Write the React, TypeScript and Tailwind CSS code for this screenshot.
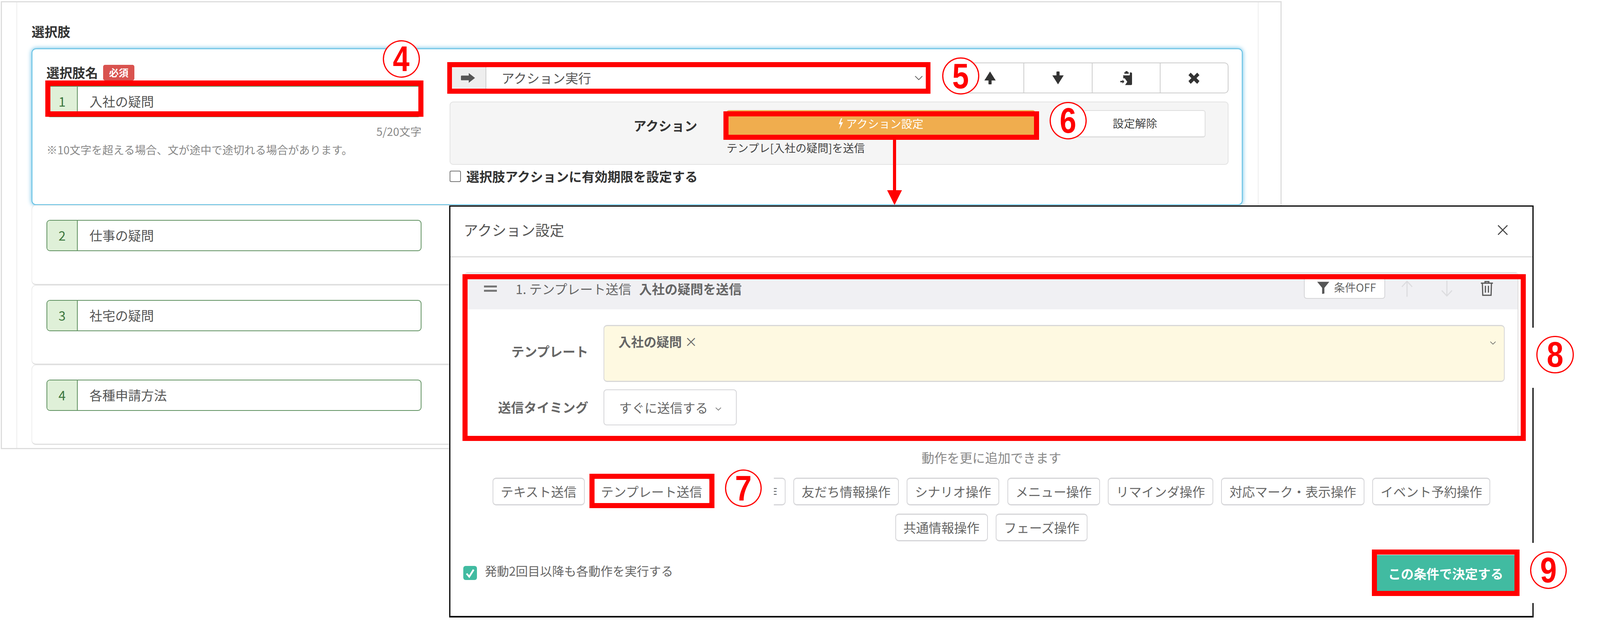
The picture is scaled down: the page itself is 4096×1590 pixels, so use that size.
import type { ReactNode } from 'react';

const Chevron = ({ className }: { className: string }) => (
  <svg viewBox="0 0 24 12" className={className} fill="none" stroke="#555" strokeWidth="2">
    <path d="M2 1l10 10L22 1" />
  </svg>
);

const ArrowUp = ({ className }: { className: string }) => (
  <svg viewBox="0 0 29 33" className={className} fill="#333">
    <path d="M14.5 0L29 23H18.5V31.5q0 1.5-1.5 1.5H12q-1.5 0-1.5-1.5V23H0z" />
  </svg>
);

const ThinArrow = ({ up }: { up: boolean }) => (
  <svg viewBox="0 0 32 44" className="w-[30px] h-[44px]" fill="none" stroke="#dcdcdf" strokeWidth="3">
    {up ? <path d="M16 44V2M2 17L16 2l14 15" /> : <path d="M16 0v42M2 27l14 15 14-15" />}
  </svg>
);

const ChoiceInput = ({ no, text }: { no: number; text: string }) => (
  <div className="flex w-[960px] h-[80px] rounded-[9px] border-2 border-[#5f9160] overflow-hidden bg-white">
    <div className="flex items-center justify-center w-[78px] bg-[#dff0d8] border-r-2 border-[#5f9160] text-[#3c763d] text-[33px]">
      {no}
    </div>
    <div className="flex items-center pl-[30px] text-[33px] text-[#555]">{text}</div>
  </div>
);

const AddButton = ({ children }: { children: ReactNode }) => (
  <div className="flex items-center h-[71px] px-[19px] rounded-[9px] border-2 border-b-[3px] border-t-[3px] border-[#d5d5d8] bg-white text-[32.5px] text-[#666] whitespace-nowrap">
    {children}
  </div>
);

const Circle = ({ className, children }: { className: string; children: ReactNode }) => (
  <div
    className={
      'absolute flex items-center justify-center rounded-[50%] border-[3px] border-[#ff0000] bg-white text-[#ff0000] font-bold text-[90px] leading-none font-["Liberation_Sans",sans-serif] ' +
      className
    }>
    <span className="scale-x-[0.85]">{children}</span>
  </div>
);

const SelectedCard = () => (
  <div className="flex h-[401px] rounded-[11px] border-2 border-[#5fbfe3] bg-white shadow-[0_0_12px_rgba(80,180,225,1)]">
    <div className="w-[996px] pl-[36px] pt-[40px]">
      <div className="flex items-center h-[40px] gap-[13px]">
        <span className="text-[33px] font-bold text-[#333]">選択肢名</span>
        <span className="flex items-center justify-center w-[80px] h-[40px] rounded-[5px] bg-[#d9534f] text-white text-[25px] font-bold">
          必須
        </span>
      </div>
      <div className="mt-[14px]">
        <ChoiceInput no={1} text="入社の疑問" />
      </div>
      <div className="mt-[18px] w-[960px] h-[36px] leading-[36px] text-right text-[28.5px] text-[#888]">5/20文字</div>
      <div className="mt-[11px] h-[36px] leading-[36px] text-[28px] text-[#888]">
        ※10文字を超える場合、文が途中で途切れる場合があります。
      </div>
    </div>
    <div className="w-[1994px] ml-[72px] pt-[34px]">
      <div className="flex gap-[69px] h-[79px]">
        <div className="flex flex-1 rounded-[9px] border-2 border-[#ccc] overflow-hidden">
          <div className="flex items-center justify-center w-[92px] bg-[#eee] border-r-2 border-[#ccc]">
            <svg viewBox="0 0 36 25" className="w-[36px] h-[25px]" fill="#555">
              <path d="M0 8q0-1.5 1.5-1.5H20V0l16 12.5L20 25v-6.500H1.500Q0 18.500 0 17z" />
            </svg>
          </div>
          <div className="flex flex-1 items-center justify-between pl-[39px] pr-[10px] text-[33px] text-[#555]">
            アクション実行
            <Chevron className="w-[22px] h-[11px]" />
          </div>
        </div>
        <div className="flex w-[701px] rounded-[10px] border-2 border-[#ccc] bg-white">
          <div className="flex flex-1 items-center justify-center pl-[2px] border-r-2 border-[#ccc]">
            <ArrowUp className="w-[29px] h-[33px]" />
          </div>
          <div className="flex flex-1 items-center justify-center border-r-2 border-[#ccc]">
            <ArrowUp className="w-[29px] h-[33px] rotate-180" />
          </div>
          <div className="flex flex-1 items-center justify-center border-r-2 border-[#ccc]">
            <svg viewBox="0 0 32 38" className="w-[30px] h-[36px]" fill="#333">
              <path d="M14 0h6v3h3v4H11V3h3z" />
              <path d="M8 3.500v6q0 2 2 2h14q2 0 2-2v-6h3q3 0 3 3V35q0 3-3 3H13l6-9-7-9.500H8z" />
              <path d="M0 26.500h6V23l5 5.500-5 5.500v-3.500H0z" />
            </svg>
          </div>
          <div className="flex flex-1 items-center justify-center">
            <svg viewBox="0 0 30 30" className="w-[29px] h-[28px]" fill="#333">
              <path d="M6 0l9 9 9-9 6 7-8 8 8 8-6 8-9-9-9 9-6-8 8-8-8-8z" />
            </svg>
          </div>
        </div>
      </div>
      <div className="flex mt-[21px] h-[162px] rounded-[9px] border-2 border-[#e3e3e3] bg-[#f5f5f5]">
        <div className="w-[632px] pt-[39px] leading-[40px] text-right text-[33px] font-bold text-[#333]">アクション</div>
        <div className="ml-[75px] pt-[20px]">
          <div className="flex gap-[75px]">
            <div className="flex items-center justify-center gap-[8px] w-[790px] h-[70px] rounded-[6px] bg-[#f0ad4e] text-white text-[28.5px] leading-none">
              <svg viewBox="0 0 12 28" className="w-[12px] h-[28px]" fill="#fff">
                <path d="M7 0L1 15h5L3 28 12 10H6l4-10z" />
              </svg>
              <span className="-mt-[2px]">アクション設定</span>
            </div>
            <div className="flex items-center justify-center w-[361px] h-[70px] rounded-[6px] border-2 border-b-[3px] border-[#ddd] bg-white text-[28.5px] text-[#444]">
              <span className="-mt-[2px]">設定解除</span>
            </div>
          </div>
          <div className="mt-[8px] h-[36px] leading-[36px] text-[28px] text-[#444]">テンプレ[入社の疑問]を送信</div>
        </div>
      </div>
      <div className="flex items-center gap-[14px] mt-[11px] h-[37px]">
        <div className="w-[29px] h-[29px] rounded-[4px] border-2 border-[#767676] bg-white" />
        <span className="text-[33px] font-bold text-[#333]">選択肢アクションに有効期限を設定する</span>
      </div>
    </div>
  </div>
);

const PlainCard = ({ no, text, height }: { no: number; text: string; height: string }) => (
  <div className={'pl-[37px] pt-[37px] rounded-[11px] border border-b-[3px] border-[#e0e0e0] bg-white ' + height}>
    <ChoiceInput no={no} text={text} />
  </div>
);

const ActionModal = () => (
  <div className="absolute left-[1150px] top-[526px] w-[2776px] h-[1055px] border-[3px] border-b-[4px] border-black bg-white">
    <div className="flex items-center justify-between h-[130px] pl-[34px] pr-[62px] border-b-[3px] border-[#ddd]">
      <span className="-mt-[8px] text-[37px] text-[#555]">アクション設定</span>
      <svg viewBox="0 0 28 26" className="w-[28px] h-[26px] -mt-[8px]" fill="none" stroke="#444" strokeWidth="2.500">
        <path d="M2 1l24 24M26 1L2 25" />
      </svg>
    </div>
    <div className="mx-[36px] mt-[38px] h-[426px] rounded-[8px] border-2 border-[#ddd]">
      <div className="flex items-center h-[93px] pl-[48px] pr-[28px] bg-[#f0f0f3]">
        <div className="flex flex-col justify-between w-[33px] h-[16px] -mt-[14px]">
          <div className="h-[5px] bg-[#777]" />
          <div className="h-[5px] bg-[#777]" />
        </div>
        <div className="flex gap-[20px] ml-[48px] -mt-[14px] text-[32.8px] text-[#666]">
          <span>1. テンプレート送信</span>
          <span className="font-bold">入社の疑問を送信</span>
        </div>
        <div className="flex items-center gap-[12px] ml-auto w-[208px] h-[55px] -mt-[17px] pl-[32px] rounded-[7px] border-2 border-[#d5d5d8] bg-white text-[28px] text-[#666]">
          <svg viewBox="0 0 32 32" className="w-[31px] h-[32px]" fill="#555">
            <path d="M0 0h32L19 16v15l-6 1V16z" />
          </svg>
          <span className="leading-none -mt-[4px]">条件OFF</span>
        </div>
        <div className="flex items-center justify-center w-[102px] ml-[5px] -mt-[14px]">
          <ThinArrow up />
        </div>
        <div className="flex items-center justify-center w-[102px] -mt-[14px]">
          <ThinArrow up={false} />
        </div>
        <div className="flex items-center justify-center w-[102px] -mt-[14px]">
          <svg viewBox="0 0 32 40" className="w-[31px] h-[39px]" fill="none" stroke="#555" strokeWidth="3">
            <path d="M0 6h32M11 6V2h10v4M4 6l1 32h22l1-32M12 13v18M20 13v18" />
          </svg>
        </div>
      </div>
      <div className="flex mt-[40px] h-[146px]">
        <div className="w-[315px] pt-[47px] leading-[40px] text-right text-[33px] font-bold text-[#666]">テンプレート</div>
        <div className="flex justify-between w-[2307px] ml-[39px] pl-[36px] pr-[20px] pt-[18px] rounded-[9px] border-2 border-t-[3px] border-b-[3px] border-[#d8d8d8] bg-[#fef9e1]">
          <div className="text-[32.500px] leading-[42px] text-[#666]">
            <span className="font-bold">入社の疑問</span> ×
          </div>
          <Chevron className="w-[16px] h-[8px] mt-[21px]" />
        </div>
      </div>
      <div className="flex items-center mt-[19px] h-[92px]">
        <div className="w-[315px] text-right text-[33px] font-bold text-[#666]">送信タイミング</div>
        <div className="flex items-center w-[341px] h-[92px] ml-[39px] pl-[38px] rounded-[8px] border-2 border-[#d5d5d8] bg-white text-[32.500px] text-[#666]">
          すぐに送信する
          <Chevron className="w-[16px] h-[8px] ml-[18px] mt-[8px]" />
        </div>
      </div>
    </div>
    <div className="mt-[26px] h-[44px] leading-[44px] text-center text-[32.500px] text-[#888]">動作を更に追加できます</div>
    <div className="flex flex-wrap justify-center gap-x-[20.5px] gap-y-[21px] mt-[30px] px-[60px]">
      {[
        'テキスト送信',
        'テンプレート送信',
        'タグ操作',
        '友だち情報操作',
        'シナリオ操作',
        'メニュー操作',
        'リマインダ操作',
        '対応マーク・表示操作',
        'イベント予約操作',
        '共通情報操作',
        'フェーズ操作',
      ].map((label) => (
        <AddButton key={label}>{label}</AddButton>
      ))}
    </div>
    <div className="flex justify-between mt-[32px] pl-[33px] pr-[46px]">
      <div className="flex items-start gap-[20px]">
        <div className="flex items-center justify-center w-[35px] h-[36px] mt-[31px] rounded-[6px] bg-[#41bba1]">
          <svg viewBox="0 0 24 24" className="w-[27px] h-[27px]" fill="none" stroke="#fff" strokeWidth="4">
            <path d="M4 13l6 7L20 4" />
          </svg>
        </div>
        <span className="mt-[21px] h-[44px] leading-[44px] text-[31px] text-[#666]">発動2回目以降も各動作を実行する</span>
      </div>
      <div className="flex items-center justify-center w-[352px] h-[96px] border-t-[3px] border-white bg-[#41bba1] text-white text-[32.800px] font-bold">
        この条件で決定する
      </div>
    </div>
  </div>
);

const Annotations = () => (
  <>
    {/* Red highlight boxes */}
    <div className="absolute left-[116px] top-[206px] w-[968px] h-[93px] border-x-[13px] border-y-[14px] border-[#ff0000]" />
    <div className="absolute left-[1145px] top-[159px] w-[1237px] h-[81px] border-x-[12px] border-y-[13px] border-[#ff0000]" />
    <div className="absolute left-[1852px] top-[285px] w-[808px] h-[73px] border-x-[13px] border-y-[13px] border-[#ff0000]" />
    <div className="absolute left-[1184px] top-[702px] w-[2722px] h-[427px] border-x-[13px] border-y-[13px] border-[#ff0000]" />
    <div className="absolute left-[1509px] top-[1213px] w-[320px] h-[88px] border-x-[13px] border-y-[13px] border-[#ff0000]" />
    <div className="absolute left-[3512px] top-[1407px] w-[378px] h-[119px] border-x-[13px] border-y-[13px] border-[#ff0000]" />

    {/* Arrow from the action button down to the modal */}
    <svg viewBox="0 0 38 167" className="absolute left-[2271px] top-[358px] w-[38px] h-[167px]" fill="#ff0000">
      <path d="M15 0h8v129h15L19 167 0 129h15z" />
    </svg>

    {/* White patches behind the numbers */}
    <div className="absolute left-[1829px] top-[1205px] w-[152px] h-[96px] bg-white" />
    <div className="absolute left-[3915px] top-[839px] w-[20px] h-[154px] bg-white" />
    <div className="absolute left-[3915px] top-[1390px] w-[20px] h-[154px] bg-white" />

    <Circle className="left-[980px] top-[103px] w-[95px] h-[96px]">4</Circle>
    <Circle className="left-[2412px] top-[147px] w-[95px] h-[95px]">5</Circle>
    <Circle className="left-[2687px] top-[261px] w-[95px] h-[96px]">6</Circle>
    <Circle className="left-[1856px] top-[1202px] w-[94px] h-[96px]">7</Circle>
    <Circle className="left-[3933px] top-[860px] w-[96px] h-[96px]">8</Circle>
    <Circle className="left-[3917px] top-[1412px] w-[94px] h-[96px]">9</Circle>
  </>
);

export default function App() {
  return (
    <div className="relative w-[4096px] h-[1590px] overflow-hidden bg-white font-['Noto_Sans_CJK_JP',sans-serif]">
      <div className="flex w-[3279px] h-[1147px] ml-[2px] mt-[3px] border-[3px] border-[#ddd]">
        <div className="w-[39px] border-r-2 border-[#eee]" />
        <div className="w-[3176px] pl-[37px] pr-[39px] pt-[51px]">
          <div className="h-[46px] leading-[46px] text-[33px] font-bold text-[#333]">選択肢</div>
          <div className="mt-[21px]">
            <SelectedCard />
            <PlainCard no={2} text="仕事の疑問" height="h-[205px]" />
            <PlainCard no={3} text="社宅の疑問" height="h-[204px]" />
            <PlainCard no={4} text="各種申請方法" height="h-[205px]" />
          </div>
        </div>
        <div className="flex-1 border-l-2 border-[#eee]" />
      </div>
      <ActionModal />
      <Annotations />
    </div>
  );
}
